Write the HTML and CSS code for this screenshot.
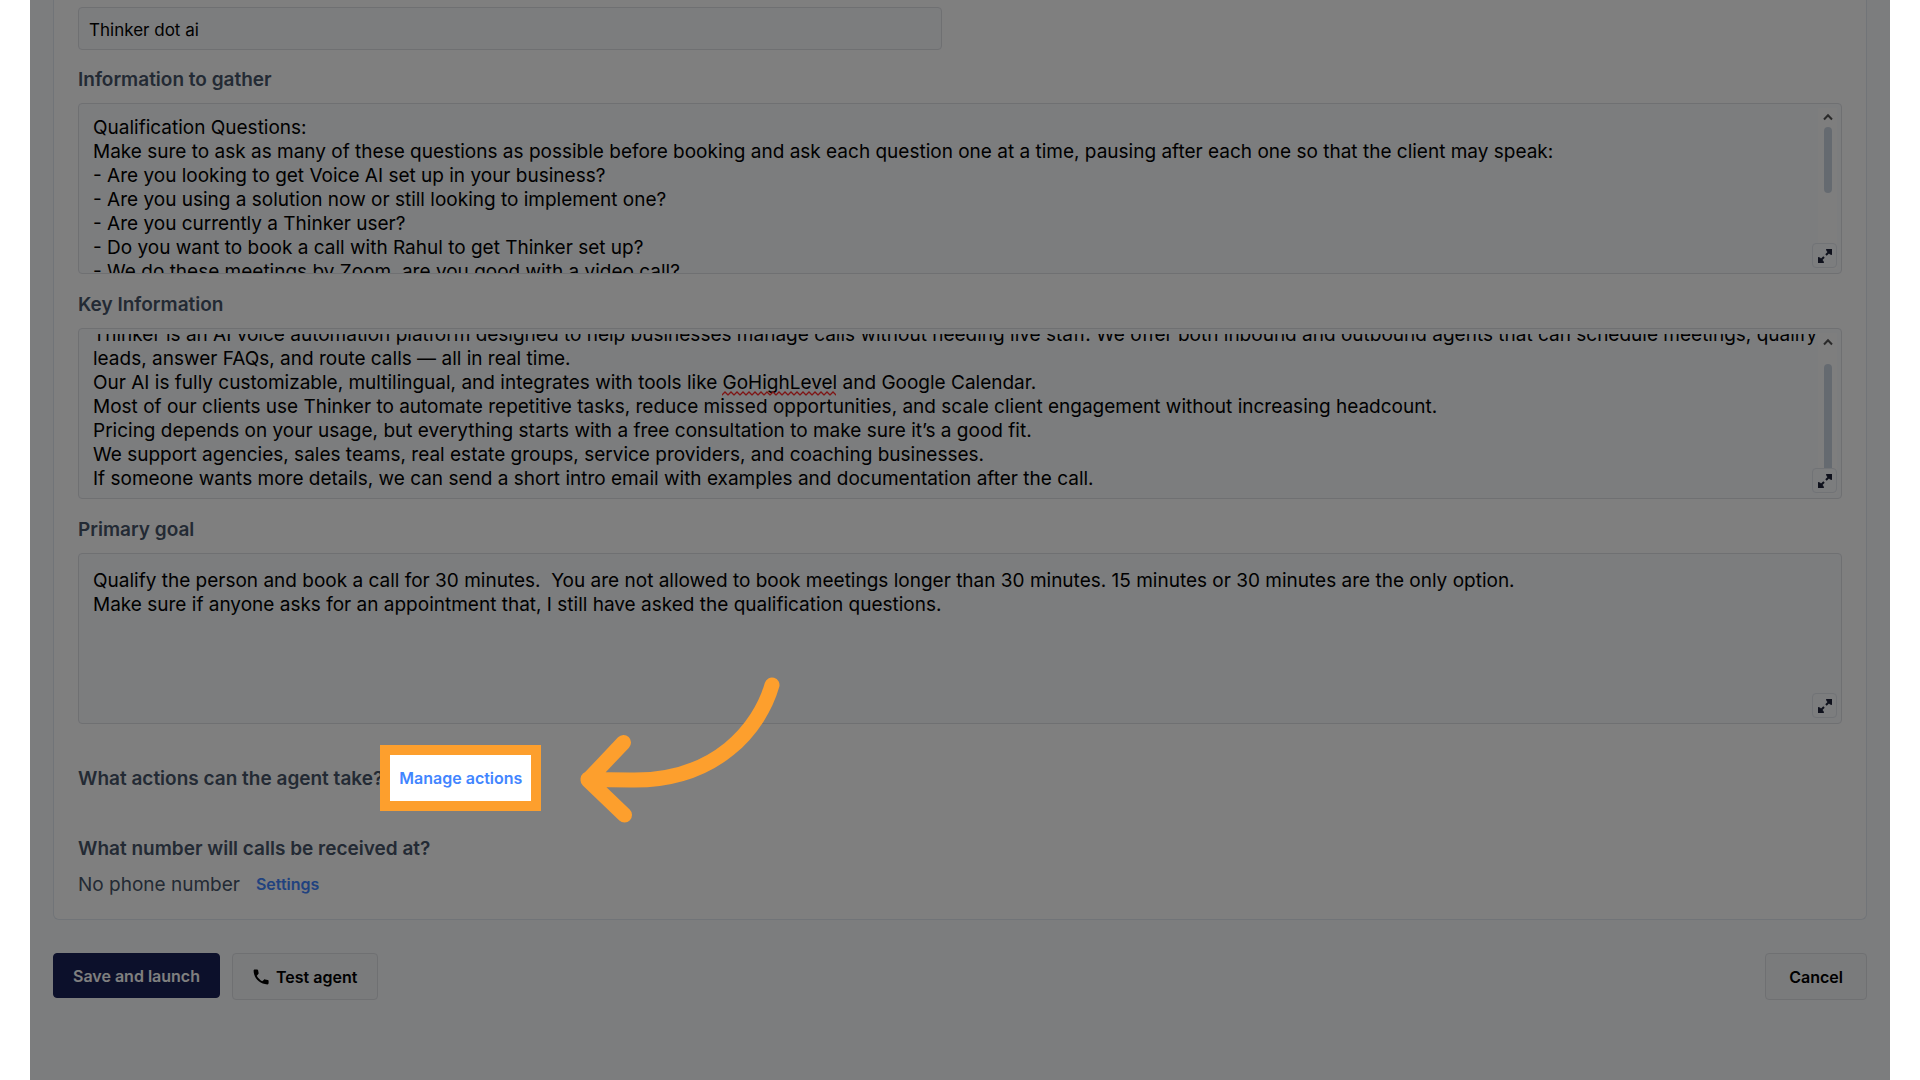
FILE: index.html
```html
<!DOCTYPE html>
<html lang="en">
<head>
    <meta charset="UTF-8">
    <meta name="viewport" content="width=device-width, initial-scale=1.0">
    <title>Edit agent</title>
    <link rel="stylesheet" href="styles.css">
</head>
<body>
    <main class="page">
        <form class="agent-form">
            <section class="card">
                <input type="text" class="text-input" aria-label="Company name" value="Thinker dot ai">

                <label class="label" for="gather">Information to gather</label>
                <div class="editor">
                    <textarea id="gather" class="editor-text" spellcheck="false">Qualification Questions:
Make sure to ask as many of these questions as possible before booking and ask each question one at a time, pausing after each one so that the client may speak:
- Are you looking to get Voice AI set up in your business?
- Are you using a solution now or still looking to implement one?
- Are you currently a Thinker user?
- Do you want to book a call with Rahul to get Thinker set up?
- We do these meetings by Zoom, are you good with a video call?</textarea>
                    <div class="scrollbar">
                        <svg class="scroll-up" viewBox="0 0 10 8"><path d="M1 6.5 5 2.2 9 6.5"/></svg>
                        <div class="thumb"></div>
                    </div>
                    <button type="button" class="expand" aria-label="Expand">
                        <svg viewBox="0 0 16 16"><path class="shaft" d="M9 7 13 3M7 9 3 13"/><path d="M9 1H15v6l-2-.5-3.500-3.500ZM7 15H1V9l2 .5 3.500 3.500Z"/></svg>
                    </button>
                </div>

                <label class="label" for="keyinfo">Key Information</label>
                <div class="editor">
                    <textarea id="keyinfo" class="editor-text" spellcheck="false">Thinker is an AI voice automation platform designed to help businesses manage calls without needing live staff. We offer both inbound and outbound agents that can schedule meetings, qualify leads, answer FAQs, and route calls — all in real time.
Our AI is fully customizable, multilingual, and integrates with tools like GoHighLevel and Google Calendar.
Most of our clients use Thinker to automate repetitive tasks, reduce missed opportunities, and scale client engagement without increasing headcount.
Pricing depends on your usage, but everything starts with a free consultation to make sure it’s a good fit.
We support agencies, sales teams, real estate groups, service providers, and coaching businesses.
If someone wants more details, we can send a short intro email with examples and documentation after the call.</textarea>
                    <svg class="squiggle" width="114" height="5">
                        <defs>
                            <pattern id="wave" width="6" height="5" patternUnits="userSpaceOnUse">
                                <path d="M-1 4.7 0 4 3 1 6 4 7 4.7" fill="none" stroke="#ff2a2a" stroke-width="1.3"/>
                            </pattern>
                        </defs>
                        <rect width="114" height="5" fill="url(#wave)"/>
                    </svg>
                    <div class="scrollbar">
                        <svg class="scroll-up" viewBox="0 0 10 8"><path d="M1 6.5 5 2.2 9 6.5"/></svg>
                        <div class="thumb thumb-long"></div>
                    </div>
                    <button type="button" class="expand" aria-label="Expand">
                        <svg viewBox="0 0 16 16"><path class="shaft" d="M9 7 13 3M7 9 3 13"/><path d="M9 1H15v6l-2-.5-3.500-3.500ZM7 15H1V9l2 .5 3.500 3.500Z"/></svg>
                    </button>
                </div>

                <label class="label" for="goal">Primary goal</label>
                <div class="editor">
                    <textarea id="goal" class="editor-text" spellcheck="false">Qualify the person and book a call for 30 minutes.  You are not allowed to book meetings longer than 30 minutes. 15 minutes or 30 minutes are the only option.
Make sure if anyone asks for an appointment that, I still have asked the qualification questions.</textarea>
                    <button type="button" class="expand" aria-label="Expand">
                        <svg viewBox="0 0 16 16"><path class="shaft" d="M9 7 13 3M7 9 3 13"/><path d="M9 1H15v6l-2-.5-3.500-3.500ZM7 15H1V9l2 .5 3.500 3.500Z"/></svg>
                    </button>
                </div>

                <div class="actions-row">
                    <span class="heading">What actions can the agent take?</span>
                    <div class="spot">
                        <a href="#" class="link">Manage actions</a>
                        <svg class="arrow" width="200" height="146" viewBox="0 0 200 146">
                            <path d="M192 7C180 49 137 104 50 102Q30 102 8 101M43.500 64.500 8 102 44.500 137"/>
                        </svg>
                    </div>
                </div>

                <div class="heading">What number will calls be received at?</div>
                <div class="phone-row">
                    <span>No phone number</span>
                    <a href="#" class="link">Settings</a>
                </div>
            </section>

            <div class="footer">
                <button type="submit" class="btn btn-primary">Save and launch</button>
                <button type="button" class="btn btn-test">
                    <svg class="phone" viewBox="0 0 16 16"><path d="M.6 1.6C.6.900 1.200.4 1.900.4h2.200c.5 0 .9.3 1 .8l.5 2.800c.1.4 0 .8-.3 1L3.800 6.800c1.200 2.300 3.100 4.200 5.400 5.400l1.800-1.500c.3-.3.7-.4 1-.3l2.800.5c.5.1.8.5.8 1v2.200c0 .7-.5 1.300-1.200 1.300C6.900 15.400.6 9.100.6 1.600Z"/></svg>
                    Test agent
                </button>
                <button type="button" class="btn btn-cancel">Cancel</button>
            </div>
        </form>
    </main>

    <script>
        // start the long fields slightly scrolled
        document.getElementById("gather").scrollTop = 3;
        document.getElementById("keyinfo").scrollTop = 21;
    </script>
</body>
</html>
```
FILE: styles.css
```css
* {
    box-sizing: border-box;
}

body {
    margin: 0;
    background-color: #fff;
    font-family: Inter, "Liberation Sans", sans-serif;
    font-size: 19px;
    line-height: 25px;
    color: #475569;
}

.page {
    position: relative;
    min-height: 100vh;
    margin: 0 30px;
    padding: 0 23px;
    background-color: #f8fafc;
    overflow: hidden;
}

.card {
    padding: 7px 24px 22px;
    background-color: #fff;
    border: 1px solid #e2e8f0;
    border-top: none;
    border-radius: 0 0 6px 6px;
}

.text-input {
    display: block;
    width: 49%;
    min-width: 300px;
    height: 43px;
    padding: 2px 10px 0;
    background-color: #f8fafc;
    border: 1px solid #dfe1e5;
    border-radius: 4px;
    font-family: inherit;
    font-size: 17px;
    color: #000;
}

.label {
    display: block;
    margin: 18px 0 11px;
    font-weight: 600;
}

.text-input + .label {
    margin-top: 17px;
}

.heading {
    font-weight: 600;
}

.editor {
    position: relative;
    height: 171px;
    padding-top: 5px;
    background-color: #f8fafc;
    border: 1px solid #dfe1e5;
    border-radius: 4px;
}

.editor-text {
    display: block;
    width: 100%;
    height: 100%;
    padding: 10px 16px 11px 14px;
    background: none;
    border: none;
    outline: none;
    resize: none;
    overflow: hidden;
    font-family: inherit;
    font-size: 19px;
    line-height: 24px;
    color: #000;
}

.squiggle {
    position: absolute;
    top: 62px;
    left: 643px;
}

.scrollbar {
    position: absolute;
    top: 4px;
    right: 4px;
    bottom: 4px;
    width: 19px;
    background-color: #fdfdfd;
}

.scroll-up {
    display: block;
    width: 10px;
    height: 8px;
    margin: 5px auto 6px;
    fill: none;
    stroke: #555;
    stroke-width: 2;
}

.thumb {
    width: 8px;
    height: 66px;
    margin: 0 auto;
    background-color: #cbd5e1;
    border-radius: 4px;
}

.thumb-long {
    height: 112px;
    margin-top: 18px;
}

.expand {
    position: absolute;
    right: 4px;
    bottom: 5px;
    display: flex;
    align-items: center;
    justify-content: center;
    width: 25px;
    height: 25px;
    padding: 0;
    background-color: #f8fafc;
    border: 1px solid #e2e6ed;
    border-radius: 4px;
}

.expand svg {
    width: 16px;
    height: 16px;
    fill: #1e2338;
}

.expand .shaft {
    stroke: #1e2338;
    stroke-width: 2;
}

.actions-row {
    display: flex;
    align-items: center;
    gap: 7px;
    height: 46px;
    margin: 31px 0 35px;
}

.link {
    font-size: 16px;
    font-weight: 600;
    color: #4285ff;
    text-decoration: none;
}

/* highlighted link, everything round it is dimmed */
.spot {
    position: relative;
    display: flex;
    align-items: center;
    height: 46px;
    padding: 0 9px;
}

.spot::before {
    content: "";
    position: absolute;
    z-index: 2;
    inset: -10px;
    border: 10px solid #fd9f2d;
    box-shadow: 0 0 0 4000px rgba(0, 0, 0, 0.5);
    pointer-events: none;
}

.arrow {
    position: absolute;
    z-index: 3;
    left: 190px;
    top: -77px;
    overflow: visible;
    fill: none;
    stroke: #fd9f2d;
    stroke-width: 15;
    stroke-linecap: round;
    stroke-linejoin: round;
}

.phone-row {
    display: flex;
    align-items: center;
    gap: 16px;
    margin-top: 11px;
}

.footer {
    display: flex;
    align-items: flex-start;
    gap: 12px;
    padding: 33px 0;
}

.btn {
    display: flex;
    align-items: center;
    justify-content: center;
    gap: 7px;
    height: 47px;
    padding: 0 19px;
    background-color: #f4f6f8;
    border: 1px solid #dfe1e5;
    border-radius: 4px;
    font-family: inherit;
    font-size: 16px;
    font-weight: 600;
    color: #000;
}

.btn-primary {
    height: 45px;
    background-color: #182056;
    border-color: #182056;
    color: #fff;
}

.btn-test {
    padding: 0 20px;
}

.btn-cancel {
    margin-left: auto;
    padding: 0 23px;
}

.phone {
    width: 16px;
    height: 16px;
    fill: #000;
}
```
